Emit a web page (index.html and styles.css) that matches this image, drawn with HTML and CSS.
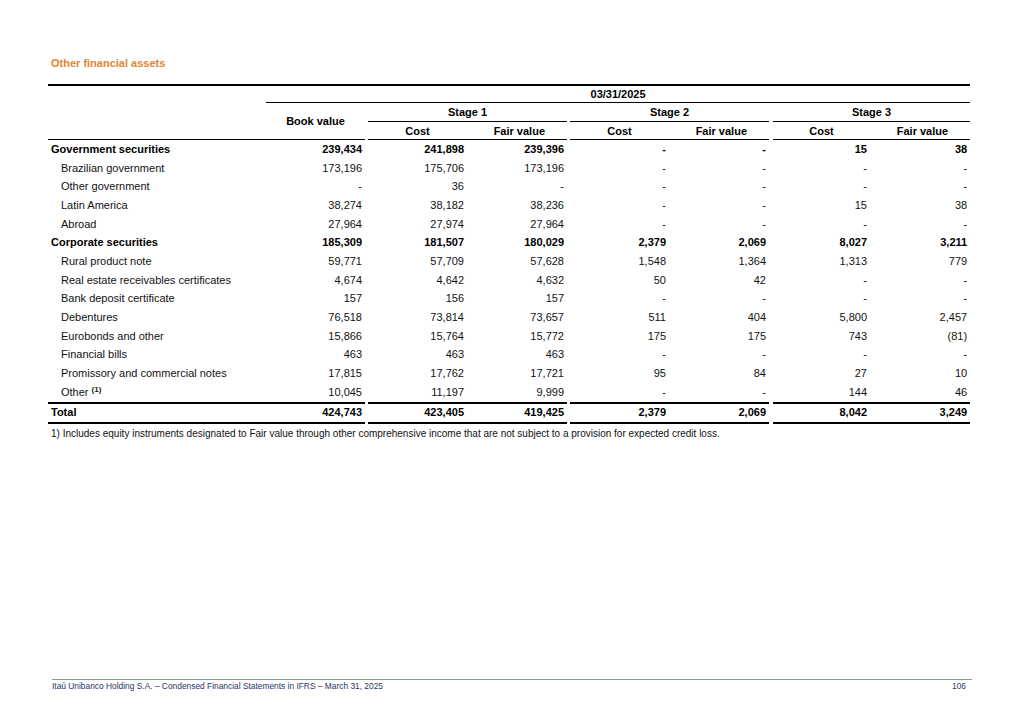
FILE: index.html
```html
<!DOCTYPE html>
<html lang="en">
<head>
<meta charset="utf-8">
<title>Other financial assets</title>
<link rel="stylesheet" href="styles.css">
</head>
<body>
<div class="page">
  <h1 class="title">Other financial assets</h1>
  <table class="fin">
    <colgroup>
      <col class="c-label"><col class="c-num">
      <col class="c-sp">
      <col class="c-num"><col class="c-num2">
      <col class="c-sp">
      <col class="c-num"><col class="c-num2">
      <col class="c-sp4">
      <col class="c-num3"><col class="c-num2">
    </colgroup>
    <thead>
      <tr class="h1">
        <th rowspan="3" class="lbl bb"></th>
        <th colspan="10" class="date bb">03/31/2025</th>
      </tr>
      <tr class="h2">
        <th rowspan="2" class="bb">Book value</th>
        <th class="sp"></th>
        <th colspan="2" class="bb">Stage 1</th>
        <th class="sp"></th>
        <th colspan="2" class="bb">Stage 2</th>
        <th class="sp"></th>
        <th colspan="2" class="bb">Stage 3</th>
      </tr>
      <tr class="h3">
        <th class="sp"></th>
        <th class="bb">Cost</th><th class="bb fv">Fair value</th>
        <th class="sp"></th>
        <th class="bb">Cost</th><th class="bb fv">Fair value</th>
        <th class="sp"></th>
        <th class="bb">Cost</th><th class="bb fv">Fair value</th>
      </tr>
    </thead>
    <tbody>
      <tr class="grp"><td>Government securities</td><td>239,434</td><td class="sp"></td><td>241,898</td><td>239,396</td><td class="sp"></td><td>-</td><td>-</td><td class="sp"></td><td>15</td><td>38</td></tr>
      <tr class="sub"><td>Brazilian government</td><td>173,196</td><td class="sp"></td><td>175,706</td><td>173,196</td><td class="sp"></td><td>-</td><td>-</td><td class="sp"></td><td>-</td><td>-</td></tr>
      <tr class="sub"><td>Other government</td><td>-</td><td class="sp"></td><td>36</td><td>-</td><td class="sp"></td><td>-</td><td>-</td><td class="sp"></td><td>-</td><td>-</td></tr>
      <tr class="sub"><td>Latin America</td><td>38,274</td><td class="sp"></td><td>38,182</td><td>38,236</td><td class="sp"></td><td>-</td><td>-</td><td class="sp"></td><td>15</td><td>38</td></tr>
      <tr class="sub"><td>Abroad</td><td>27,964</td><td class="sp"></td><td>27,974</td><td>27,964</td><td class="sp"></td><td>-</td><td>-</td><td class="sp"></td><td>-</td><td>-</td></tr>
      <tr class="grp"><td>Corporate securities</td><td>185,309</td><td class="sp"></td><td>181,507</td><td>180,029</td><td class="sp"></td><td>2,379</td><td>2,069</td><td class="sp"></td><td>8,027</td><td>3,211</td></tr>
      <tr class="sub"><td>Rural product note</td><td>59,771</td><td class="sp"></td><td>57,709</td><td>57,628</td><td class="sp"></td><td>1,548</td><td>1,364</td><td class="sp"></td><td>1,313</td><td>779</td></tr>
      <tr class="sub"><td>Real estate receivables certificates</td><td>4,674</td><td class="sp"></td><td>4,642</td><td>4,632</td><td class="sp"></td><td>50</td><td>42</td><td class="sp"></td><td>-</td><td>-</td></tr>
      <tr class="sub"><td>Bank deposit certificate</td><td>157</td><td class="sp"></td><td>156</td><td>157</td><td class="sp"></td><td>-</td><td>-</td><td class="sp"></td><td>-</td><td>-</td></tr>
      <tr class="sub"><td>Debentures</td><td>76,518</td><td class="sp"></td><td>73,814</td><td>73,657</td><td class="sp"></td><td>511</td><td>404</td><td class="sp"></td><td>5,800</td><td>2,457</td></tr>
      <tr class="sub"><td>Eurobonds and other</td><td>15,866</td><td class="sp"></td><td>15,764</td><td>15,772</td><td class="sp"></td><td>175</td><td>175</td><td class="sp"></td><td>743</td><td>(81)</td></tr>
      <tr class="sub"><td>Financial bills</td><td>463</td><td class="sp"></td><td>463</td><td>463</td><td class="sp"></td><td>-</td><td>-</td><td class="sp"></td><td>-</td><td>-</td></tr>
      <tr class="sub"><td>Promissory and commercial notes</td><td>17,815</td><td class="sp"></td><td>17,762</td><td>17,721</td><td class="sp"></td><td>95</td><td>84</td><td class="sp"></td><td>27</td><td>10</td></tr>
      <tr class="sub"><td>Other <sup>(1)</sup></td><td>10,045</td><td class="sp"></td><td>11,197</td><td>9,999</td><td class="sp"></td><td>-</td><td>-</td><td class="sp"></td><td>144</td><td>46</td></tr>
      <tr class="total"><td>Total</td><td>424,743</td><td class="sp"></td><td>423,405</td><td>419,425</td><td class="sp"></td><td>2,379</td><td>2,069</td><td class="sp"></td><td>8,042</td><td>3,249</td></tr>
    </tbody>
  </table>
  <p class="note">1) Includes equity instruments designated to Fair value through other comprehensive income that are not subject to a provision for expected credit loss.</p>
  <footer class="footer">
    <span>Itaú Unibanco Holding S.A. – Condensed Financial Statements in IFRS – March 31, 2025</span>
    <span class="pg">106</span>
  </footer>
</div>
</body>
</html>
```

FILE: styles.css
```css
html, body {
  margin: 0;
  padding: 0;
  background: #fff;
}

body {
  font-family: "Liberation Sans", Arial, sans-serif;
  color: #000;
}

.page {
  width: 1019px;
  height: 720px;
  box-sizing: border-box;
  padding: 56px 0 29px 48px;
  display: flex;
  flex-direction: column;
}

.title {
  margin: 0 0 14px 3px;
  font-size: 11px;
  line-height: 14px;
  font-weight: bold;
  color: #e3852e;
}

.fin {
  width: 922px;
  table-layout: fixed;
  border-collapse: separate;
  border-spacing: 0;
  border-top: 2px solid #000;
  font-size: 11px;
}

.c-label { width: 218px; }
.c-num { width: 99px; }
.c-num2 { width: 100px; }
.c-num3 { width: 97px; }
.c-sp { width: 3px; }
.c-sp4 { width: 4px; }

.fin th,
.fin td {
  padding: 0 3px;
  white-space: nowrap;
  overflow: visible;
}

.fin th {
  font-weight: bold;
  text-align: center;
  vertical-align: middle;
}

.fin th.fv {
  text-align: right;
  padding-right: 22px;
}

.fin .sp {
  padding: 0;
}

.fin .bb {
  border-bottom: 1px solid #000;
}

.h1 th { height: 16px; }
.h2 th { height: 18px; }
.h3 th { height: 17px; }

.fin tbody td {
  height: 18.7px;
  text-align: right;
  vertical-align: middle;
  line-height: 13px;
}

.fin tbody td:first-child {
  text-align: left;
}

.grp td {
  font-weight: bold;
}

.sub td:first-child {
  padding-left: 13px;
}

.sub td {
  color: #111;
}

.fin sup {
  font-size: 8px;
  font-weight: bold;
  vertical-align: 4px;
  line-height: 0;
}

.total td {
  font-weight: bold;
  height: 15px;
  border-top: 2px solid #000;
  border-bottom: 2px solid #000;
}

.total td.sp {
  border: 0;
}

.note {
  margin: 4px 0 0 3px;
  font-size: 10px;
  line-height: 12px;
  color: #111;
}

.footer {
  margin-top: auto;
  margin-left: 4px;
  width: 920px;
  border-top: 1px solid #8796ad;
  padding: 1px 6px 0 0;
  box-sizing: border-box;
  display: flex;
  justify-content: space-between;
  font-size: 8.4px;
  line-height: 10px;
  color: #1f3466;
}

.footer .pg {
  color: #2a3a5c;
}
```
